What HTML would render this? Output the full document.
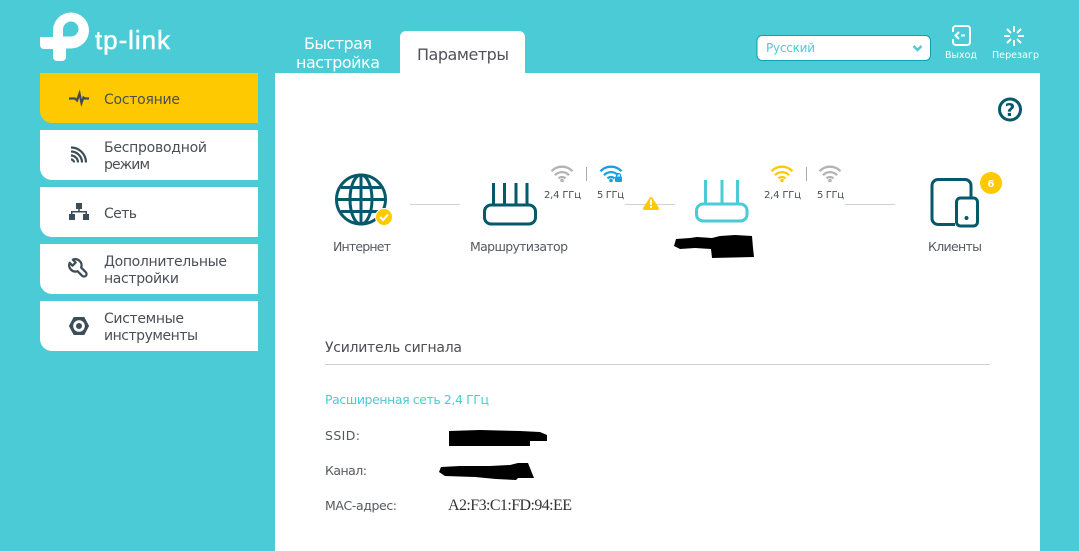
<!DOCTYPE html>
<html lang="ru">
<head>
<meta charset="utf-8">
<title>TP-Link</title>
<style>
html,body{margin:0;padding:0;width:1079px;height:551px;overflow:hidden;background:#4acbd6}
svg{display:block}
text{font-family:"DejaVu Sans","Liberation Sans",sans-serif;fill:#4a4f55}
.n{font-size:14px}
.s{font-size:10px;fill:#4a4f55}
.l{font-size:12px;fill:#55595e}
.f{font-size:12.5px;fill:#55595e}
</style>
</head>
<body>
<svg width="1079" height="551" viewBox="0 0 1079 551" xmlns="http://www.w3.org/2000/svg">
<defs>
<g id="wifi" fill="none" stroke-width="2.300">
<path d="M-10.500 -9.800A14.500 14.500 0 0 1 10.500 -9.800"/>
<path d="M-7 -5.800A9.500 9.500 0 0 1 7 -5.800"/>
<path d="M-3.500 -2.600A5 5 0 0 1 3.500 -2.600"/>
</g>
</defs>
<rect width="1079" height="551" fill="#4acbd6"/>

<!-- logo -->
<path fill="#fff" fill-rule="evenodd" d="M53 37V30A18 18 0 1 1 71 48.500H66V57a4 4 0 0 1-4 4H57a4 4 0 0 1-4-4V49H44a4 4 0 0 1-4-4V37ZM63 36.500V29.500a8 8 0 0 1 8-8a7.500 7.500 0 0 1 0 15Z"/>
<text x="95" y="49" font-size="26" textLength="75" stroke="#fff" stroke-width=".5" style="fill:#fff;font-family:'Liberation Sans',sans-serif">tp-link</text>

<!-- nav -->
<path d="M40 73H258V123H52a12 12 0 0 1-12-12Z" fill="#ffc900"/>
<path d="M40 130H258V180H52a12 12 0 0 1-12-12Z" fill="#fff"/>
<path d="M40 187H258V237H52a12 12 0 0 1-12-12Z" fill="#fff"/>
<path d="M40 244H258V294H52a12 12 0 0 1-12-12Z" fill="#fff"/>
<path d="M40 301H258V351H52a12 12 0 0 1-12-12Z" fill="#fff"/>
<text class="n" x="104" y="104" textLength="76">Состояние</text>
<text class="n" x="104" y="152" textLength="103">Беспроводной</text>
<text class="n" x="104" y="169" textLength="46">режим</text>
<text class="n" x="104" y="218" textLength="33">Сеть</text>
<text class="n" x="104" y="266" textLength="123">Дополнительные</text>
<text class="n" x="104" y="283" textLength="75">настройки</text>
<text class="n" x="104" y="323" textLength="80">Системные</text>
<text class="n" x="104" y="340" textLength="94">инструменты</text>

<!-- nav icons -->
<path d="M69 98.500H75L77 100.500L79.500 93.500L81.500 103L83.500 97.500L85 98.500H89" fill="none" stroke="#3d4d58" stroke-width="2.200"/>
<g fill="none" stroke="#3d4d58" stroke-width="2.200">
<path d="M71 147.500A15 15 0 0 1 86 162.500"/>
<path d="M71 151.500A11 11 0 0 1 82 162.500"/>
<path d="M71 155.500A7 7 0 0 1 78 162.500"/>
<path d="M71 159.500A3 3 0 0 1 74 162.500"/>
</g>
<g fill="#3d4d58">
<rect x="76" y="203" width="6" height="6"/>
<rect x="69" y="214" width="6" height="6"/>
<rect x="83" y="214" width="6" height="6"/>
<path d="M78.200 208h1.600v3H87v4h-1.500v-2.500h-13V215H71v-4h7.200Z"/>
</g>
<g transform="translate(75.500,265.500) rotate(-45) scale(.8)">
<path d="M-2.800 -7.500V-2.500H2.800V-7.500A7.800 7.800 0 0 1 3.200 6.800V15A3.200 3.200 0 0 1 -3.200 15V6.800A7.800 7.800 0 0 1 -2.800 -7.500Z" fill="none" stroke="#3d4d58" stroke-width="2.800" stroke-linejoin="round"/>
</g>
<path d="M74 317.500H84L88.500 326L84 334.500H74L69.500 326Z" fill="#3d4d58" stroke="#3d4d58" stroke-width="1" stroke-linejoin="round"/>
<circle cx="79" cy="326" r="5.800" fill="#fff"/>
<circle cx="79" cy="326" r="3" fill="#3d4d58"/>

<!-- tabs -->
<text x="304" y="49" font-size="16" textLength="68" style="fill:#fff">Быстрая</text>
<text x="296" y="68" font-size="16" textLength="84" style="fill:#fff">настройка</text>
<path d="M400 73V37a6 6 0 0 1 6-6H519a6 6 0 0 1 6 6V73Z" fill="#fff"/>
<text x="417" y="60" font-size="16" textLength="92" style="fill:#54505a">Параметры</text>

<!-- content -->
<rect x="275" y="73" width="765" height="478" fill="#fff"/>

<!-- language select -->
<rect x="757" y="35.500" width="173.500" height="25" rx="5" fill="#fff" stroke="#0aa3ae" stroke-width="1"/>
<text x="766" y="52" font-size="12" textLength="49" style="fill:#4acbd6">Русский</text>
<path d="M913.500 46L917.500 50L921.500 46" fill="none" stroke="#4acbd6" stroke-width="2.400"/>

<!-- exit -->
<path d="M953 32V29a3 3 0 0 1 3-3h11a3 3 0 0 1 3 3v13a3 3 0 0 1-3 3H956a3 3 0 0 1-3-3v-3" fill="none" stroke="#fff" stroke-width="2"/>
<path d="M959 32L955.500 35.500L959 39M961 35.500H965" fill="none" stroke="#fff" stroke-width="2"/>
<text x="945" y="58" font-size="9.500" textLength="32" style="fill:#fff">Выход</text>

<!-- reboot -->
<g stroke="#fff" stroke-width="2" fill="none">
<path d="M1014 26V32M1014 40V46M1004 36H1010M1018 36H1024"/>
<path d="M1007 29L1011 33M1017 39L1021 43M1021 29L1017 33M1011 39L1007 43"/>
</g>
<text x="992" y="58" font-size="9.500" textLength="47" style="fill:#fff">Перезагр</text>

<!-- help -->
<circle cx="1010" cy="109.500" r="10.500" fill="#fff" stroke="#04596b" stroke-width="3"/>
<text x="1010" y="116" font-size="18" font-weight="700" text-anchor="middle" style="fill:#04596b">?</text>

<!-- internet -->
<g fill="none" stroke="#04596b" stroke-width="3">
<circle cx="361" cy="199.500" r="24.500"/>
<ellipse cx="361" cy="199.500" rx="11" ry="24.500"/>
<path d="M361 175V224M337 199.500H385M341 187.500H381M341 211.500H381"/>
</g>
<circle cx="384" cy="217" r="8.500" fill="#ffc900" stroke="#fff" stroke-width="1"/>
<path d="M380 217L383 220L388 214.500" fill="none" stroke="#fff" stroke-width="2"/>
<text class="f" x="333" y="251" textLength="58">Интернет</text>

<rect x="410" y="204" width="50" height="1" fill="#d2d2d2"/>

<!-- router -->
<g fill="none" stroke="#04596b" stroke-width="3">
<path d="M493.500 183V205M504.500 183V205M516 183V205M527 183V205"/>
<rect x="484.500" y="205" width="51" height="19" rx="6.500"/>
</g>
<text class="f" x="470" y="251" textLength="98">Маршрутизатор</text>

<!-- wifi 1 -->
<use href="#wifi" x="562" y="181" style="stroke:#b4b4b4"/>
<circle cx="562" cy="180.500" r="1.800" fill="#b4b4b4"/>
<rect x="586" y="167" width="1" height="14" fill="#aaa"/>
<use href="#wifi" x="611" y="181" style="stroke:#1a9fe0"/>
<circle cx="611" cy="180.500" r="1.800" fill="#1a9fe0"/>
<rect x="615" y="176.500" width="7" height="5.500" rx="1" fill="#1a9fe0"/>
<path d="M616.500 177V175.500a2 2 0 0 1 4 0V177" fill="none" stroke="#1a9fe0" stroke-width="1.200"/>
<text class="s" x="544" y="198" textLength="37">2,4 ГГц</text>
<text class="s" x="597" y="198" textLength="27">5 ГГц</text>

<!-- line + warning -->
<rect x="625" y="204" width="50" height="1" fill="#d2d2d2"/>
<path d="M651 198.500L657.500 208.500H644.500Z" fill="#ffc900" stroke="#ffc900" stroke-width="3" stroke-linejoin="round"/>
<rect x="650" y="199.500" width="2" height="5.500" fill="#fff"/>
<rect x="650" y="206" width="2" height="2" fill="#fff"/>

<!-- extender -->
<g fill="none" stroke="#4acbd6" stroke-width="3">
<path d="M705.500 180V204M722 180V204M737.500 180V204"/>
<rect x="696.500" y="204" width="50.500" height="17" rx="6.500"/>
</g>
<path d="M676 239L690 238L697 237L712 238L720 236L735 235L752 236L753 248L754 257L712 258L711 249L695 248L680 249L674 246Z" fill="#000"/>

<!-- wifi 2 -->
<use href="#wifi" x="782" y="181" style="stroke:#ffc900"/>
<circle cx="782" cy="180.500" r="1.800" fill="#ffc900"/>
<rect x="806" y="167" width="1" height="14" fill="#aaa"/>
<use href="#wifi" x="830" y="181" style="stroke:#b4b4b4"/>
<circle cx="830" cy="180.500" r="1.800" fill="#b4b4b4"/>
<text class="s" x="764" y="198" textLength="37">2,4 ГГц</text>
<text class="s" x="817" y="198" textLength="27">5 ГГц</text>
<rect x="845" y="204" width="50" height="1" fill="#d2d2d2"/>

<!-- clients -->
<path d="M955 224.500H938a6 6 0 0 1-6-6V185.500a6 6 0 0 1 6-6H965a6 6 0 0 1 6 6V197" fill="none" stroke="#04596b" stroke-width="3"/>
<rect x="956.500" y="198" width="21" height="28" rx="4" fill="#fff" stroke="#04596b" stroke-width="3"/>
<circle cx="966.500" cy="218" r="2" fill="#04596b"/>
<circle cx="991" cy="183" r="11" fill="#ffc900"/>
<text x="991" y="187" font-size="10" font-weight="700" text-anchor="middle" style="fill:#fff">6</text>
<text class="f" x="928" y="251" textLength="54">Клиенты</text>

<!-- section -->
<text x="325" y="352" font-size="14" textLength="137" style="fill:#4f4d55">Усилитель сигнала</text>
<rect x="325" y="364" width="665" height="1" fill="#cfcfcf"/>
<text x="325" y="404" font-size="12.500" textLength="164" style="fill:#4acbd6">Расширенная сеть 2,4 ГГц</text>
<text class="f" x="325" y="440" textLength="35">SSID:</text>
<text class="f" x="325" y="475" textLength="42">Канал:</text>
<text class="f" x="325" y="510" textLength="72">МАС-адрес:</text>
<path d="M449 431L480 430L520 431L540 432L547 435L547 441L530 441L530 446L449 446Z" fill="#000"/>
<path d="M441 467L460 466L490 466L510 465L518 463L528 463L534 478L518 478L516 480L496 479L475 477L445 476L439 472Z" fill="#000"/>
<text x="448" y="510" font-size="16" textLength="124" style="font-family:'Liberation Serif',serif;fill:#333">A2:F3:C1:FD:94:EE</text>
</svg>
</body>
</html>
